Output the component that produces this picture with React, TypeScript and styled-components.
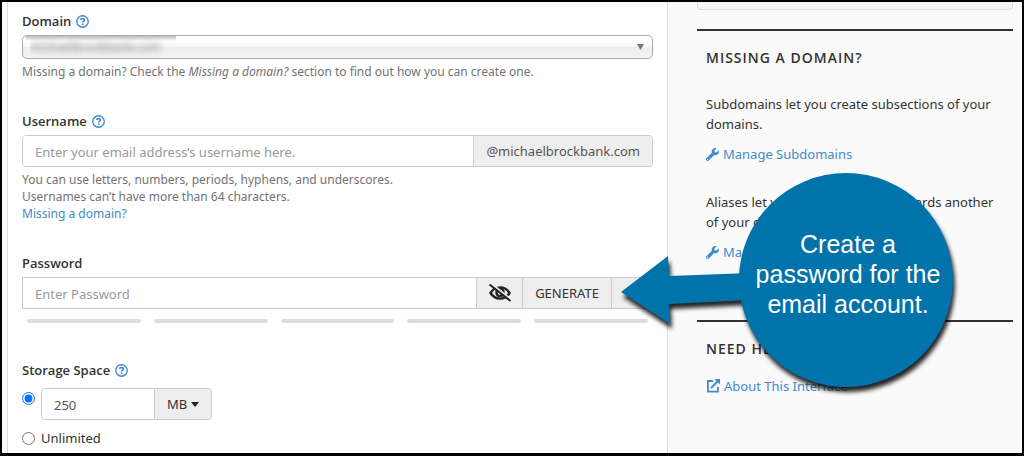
import React from 'react';
import styled, { createGlobalStyle } from 'styled-components';
import { FaWrench } from 'react-icons/fa';

const GlobalStyle = createGlobalStyle`
  *, *::before, *::after { box-sizing: border-box; }
  body {
    margin: 0;
    background: #fff;
    color: #333;
    font-family: 'Noto Sans', 'Open Sans', sans-serif;
    font-size: 13px;
    line-height: 20px;
  }
  input, select, button { font: inherit; color: inherit; }
`;

const Frame = styled.div`
  position: relative;
  display: flex;
  min-height: 100vh;
  padding-left: 5px;
  border: 2px solid #000;
  border-bottom-width: 3px;
  background: #fafafa;
  overflow: hidden;
`;

const Form = styled.form`
  flex: 1;
  min-width: 0;
  padding: 9px 14px 4px;
  background: #fff;
  border-left: 1px solid #ddd;
  border-right: 1px solid #ddd;
`;

const Field = styled.div`
  margin-bottom: 31px;
`;

const StorageField = styled.fieldset`
  margin: 0;
  padding: 0;
  border: 0;
`;

const LabelRow = styled.div`
  display: flex;
  align-items: center;
  gap: 5px;
  height: 20px;
  margin-bottom: 4px;
  font-family: 'Open Sans', 'Noto Sans', sans-serif;
  font-weight: 600;
`;

const HelpButton = styled.button`
  display: flex;
  padding: 0;
  border: 0;
  background: none;
  color: #3d85cc;
`;

const DomainSelect = styled.select`
  display: block;
  width: 100%;
  height: 24px;
  padding: 0 7px;
  appearance: none;
  border: 1px solid #aaa;
  border-radius: 5px;
  background:
    linear-gradient(rgba(120, 120, 120, 0.5), rgba(160, 160, 160, 0)) 3px 0 / 150px 5px no-repeat,
    linear-gradient(#fff 20%, #f6f6f6 50%, #eee 52%, #f4f4f4 100%);
  color: transparent;
  font-size: 12px;
  text-shadow: 0 0 7px #777;
`;

const SelectWrap = styled.div`
  position: relative;
`;

const SelectArrow = styled.svg`
  position: absolute;
  top: 9px;
  right: 9px;
  pointer-events: none;
`;

const Help = styled.p`
  margin: 4px 0 0;
  color: #737373;
  font-size: 12px;
  line-height: 17px;
`;

const Link = styled.a`
  color: #428bca;
  text-decoration: none;
`;

const Group = styled.div<{ $square?: boolean }>`
  display: flex;
  height: 32px;
  border: 1px solid #ccc;
  border-radius: ${(p) => (p.$square ? '0' : '4px')};
  overflow: hidden;
`;

const TextInput = styled.input`
  flex: 1;
  min-width: 0;
  padding: 2px 12px 0;
  border: 0;
  outline: 0;
  background: #fff;
  color: #555;
  &::placeholder { color: #999; opacity: 1; }
`;

const Addon = styled.span`
  display: flex;
  align-items: center;
  padding: 0 12px;
  border-left: 1px solid #ccc;
  background: #eee;
  color: #555;
`;

const AddonButton = styled.button<{ $width: number }>`
  display: flex;
  align-items: center;
  justify-content: center;
  gap: 4px;
  width: ${(p) => p.$width}px;
  padding: 0;
  border: 0;
  border-left: 1px solid #ccc;
  background: #eee;
  color: #333;
`;

const Strength = styled.div`
  display: grid;
  grid-template-columns: repeat(5, 1fr);
  gap: 13px;
  margin: 10px 5px 0;
  padding-bottom: 6px;
`;

const StrengthBar = styled.span`
  height: 4px;
  border-radius: 2px;
  background: #ddd;
`;

const Option = styled.div`
  display: flex;
  align-items: flex-start;
  gap: 6px;
  margin-top: 8px;
`;

const Radio = styled.input`
  width: 13px;
  height: 13px;
  margin: 4px 0 0;
`;

const QuotaGroup = styled(Group)`
  width: 171px;
`;

const Aside = styled.aside`
  width: 354px;
  padding: 0 9px 0 29px;
`;

const Well = styled.div`
  height: 8px;
  border: 1px solid #ddd;
  border-top: 0;
  border-radius: 0 0 4px 4px;
  background: #f5f5f5;
`;

const Section = styled.section<{ $gap: number }>`
  margin-top: ${(p) => p.$gap}px;
  padding: 17px 9px 0;
  border-top: 2px solid #333;
`;

const Heading = styled.h2`
  margin: 0;
  font-family: 'Open Sans', 'Noto Sans', sans-serif;
  font-size: 14px;
  font-weight: 600;
  line-height: 20px;
  letter-spacing: 1px;
  text-transform: uppercase;
`;

const Para = styled.p<{ $gap: number }>`
  margin: ${(p) => p.$gap}px 0 10px;
`;

const IconLink = styled(Link)<{ $gap?: number }>`
  display: flex;
  align-items: center;
  gap: 4px;
  margin-top: ${(p) => p.$gap ?? 0}px;
`;

const Callout = styled.div`
  position: absolute;
  top: 168px;
  right: 58px;
  width: 344px;
  height: 230px;
`;

const CalloutShape = styled.svg`
  display: block;
  filter: drop-shadow(2px 5px 2px rgba(0, 0, 0, 0.85));
`;

const CalloutText = styled.p`
  position: absolute;
  top: 59px;
  left: 122px;
  width: 212px;
  margin: 0;
  color: #fff;
  font-family: 'Liberation Sans', Arial, sans-serif;
  font-size: 25px;
  line-height: 30px;
  text-align: center;
`;

const HelpIcon = ({ label }: { label: string }) => (
  <HelpButton type="button" aria-label={label}>
    <svg width="13" height="13" viewBox="0 0 14 14" fill="none" stroke="currentColor">
      <circle cx="7" cy="7" r="6.200" strokeWidth="1.400" />
      <path d="M5 5.400C5.100 4.200 6 3.800 7 3.800c1.200 0 2 .6 2 1.600 0 1.400-1.900 1.400-1.900 2.800" strokeWidth="1.700" />
      <path d="M6.200 10h1.800" strokeWidth="1.700" />
    </svg>
  </HelpButton>
);

const EyeOff = () => (
  <svg width="24" height="20" viewBox="0 0 24 20" fill="none" stroke="#222">
    <path d="M2.500 10Q6 4.400 12 4.400T21.500 10Q18 15.600 12 15.600T2.500 10Z" strokeWidth="2.400" />
    <circle cx="12" cy="9.500" r="3.600" strokeWidth="2.400" />
    <path d="M3 .5 24 17" stroke="#eee" strokeWidth="2" />
    <path d="M1.500 1.500 22.500 18" strokeWidth="2" />
  </svg>
);

const ExternalIcon = () => (
  <svg width="14" height="14" viewBox="0 0 14 14" fill="none" stroke="currentColor">
    <path d="M7 2H1.900v10.600h10V8" strokeWidth="1.800" />
    <path d="M5 9 12 2" strokeWidth="2" />
    <path d="M8.500 0H14v5.500Z" fill="currentColor" stroke="none" />
  </svg>
);

export default function App() {
  return (
    <>
      <GlobalStyle />
      <Frame>
        <Form onSubmit={(e) => e.preventDefault()}>
          <Field>
            <LabelRow>
              <label htmlFor="domain">Domain</label>
              <HelpIcon label="About domain" />
            </LabelRow>
            <SelectWrap>
              <DomainSelect id="domain">
                <option>michaelbrockbank.com</option>
              </DomainSelect>
              <SelectArrow width="7" height="6" viewBox="0 0 7 6">
                <path d="M0 0h7L3.500 6Z" fill="#777" />
              </SelectArrow>
            </SelectWrap>
            <Help>
              Missing a domain? Check the <em>Missing a domain?</em> section to find out how you can create one.
            </Help>
          </Field>
          <Field>
            <LabelRow>
              <label htmlFor="username">Username</label>
              <HelpIcon label="About username" />
            </LabelRow>
            <Group>
              <TextInput id="username" placeholder="Enter your email address’s username here." />
              <Addon>@michaelbrockbank.com</Addon>
            </Group>
            <Help>
              You can use letters, numbers, periods, hyphens, and underscores.
              <br />
              Usernames can’t have more than 64 characters.
              <br />
              <Link href="#missing">Missing a domain?</Link>
            </Help>
          </Field>
          <Field>
            <LabelRow>
              <label htmlFor="password">Password</label>
            </LabelRow>
            <Group $square>
              <TextInput id="password" type="password" placeholder="Enter Password" />
              <AddonButton type="button" $width={46} aria-label="Show password">
                <EyeOff />
              </AddonButton>
              <AddonButton type="button" $width={89}>GENERATE</AddonButton>
              <AddonButton type="button" $width={41} aria-label="Password options" />
            </Group>
            <Strength>
              <StrengthBar />
              <StrengthBar />
              <StrengthBar />
              <StrengthBar />
              <StrengthBar />
            </Strength>
          </Field>
          <StorageField aria-label="Storage Space">
            <LabelRow>
              <span>Storage Space</span>
              <HelpIcon label="About storage space" />
            </LabelRow>
            <Option>
              <Radio type="radio" name="quota" defaultChecked aria-label="Limited" />
              <QuotaGroup>
                <TextInput defaultValue="250" aria-label="Quota" />
                <AddonButton type="button" $width={57}>
                  MB
                  <svg width="8" height="5" viewBox="0 0 8 5">
                    <path d="M0 0h8L4 5Z" fill="#222" />
                  </svg>
                </AddonButton>
              </QuotaGroup>
            </Option>
            <Option>
              <Radio type="radio" name="quota" id="unlimited" />
              <label htmlFor="unlimited">Unlimited</label>
            </Option>
          </StorageField>
        </Form>
        <Aside>
          <Well />
          <Section $gap={19} id="missing">
            <Heading>Missing a domain?</Heading>
            <Para $gap={26}>Subdomains let you create subsections of your domains.</Para>
            <IconLink href="#subdomains">
              <FaWrench size={13} />
              Manage Subdomains
            </IconLink>
            <Para $gap={28}>Aliases let you point a domain towards another of your domains.</Para>
            <IconLink href="#aliases">
              <FaWrench size={13} />
              Manage Aliases
            </IconLink>
          </Section>
          <Section $gap={58}>
            <Heading>Need help?</Heading>
            <IconLink href="#about" $gap={17}>
              <ExternalIcon />
              About This Interface
            </IconLink>
          </Section>
        </Aside>
        <Callout role="note">
          <CalloutShape width="344" height="230" viewBox="0 0 344 230">
            <circle cx="226" cy="110" r="107" fill="#0073aa" />
            <path d="M1 122 48 86 49 106 130 103V130L49 134 50 154Z" fill="#0073aa" />
          </CalloutShape>
          <CalloutText>
            Create a<br />
            password for the<br />
            email account.
          </CalloutText>
        </Callout>
      </Frame>
    </>
  );
}
